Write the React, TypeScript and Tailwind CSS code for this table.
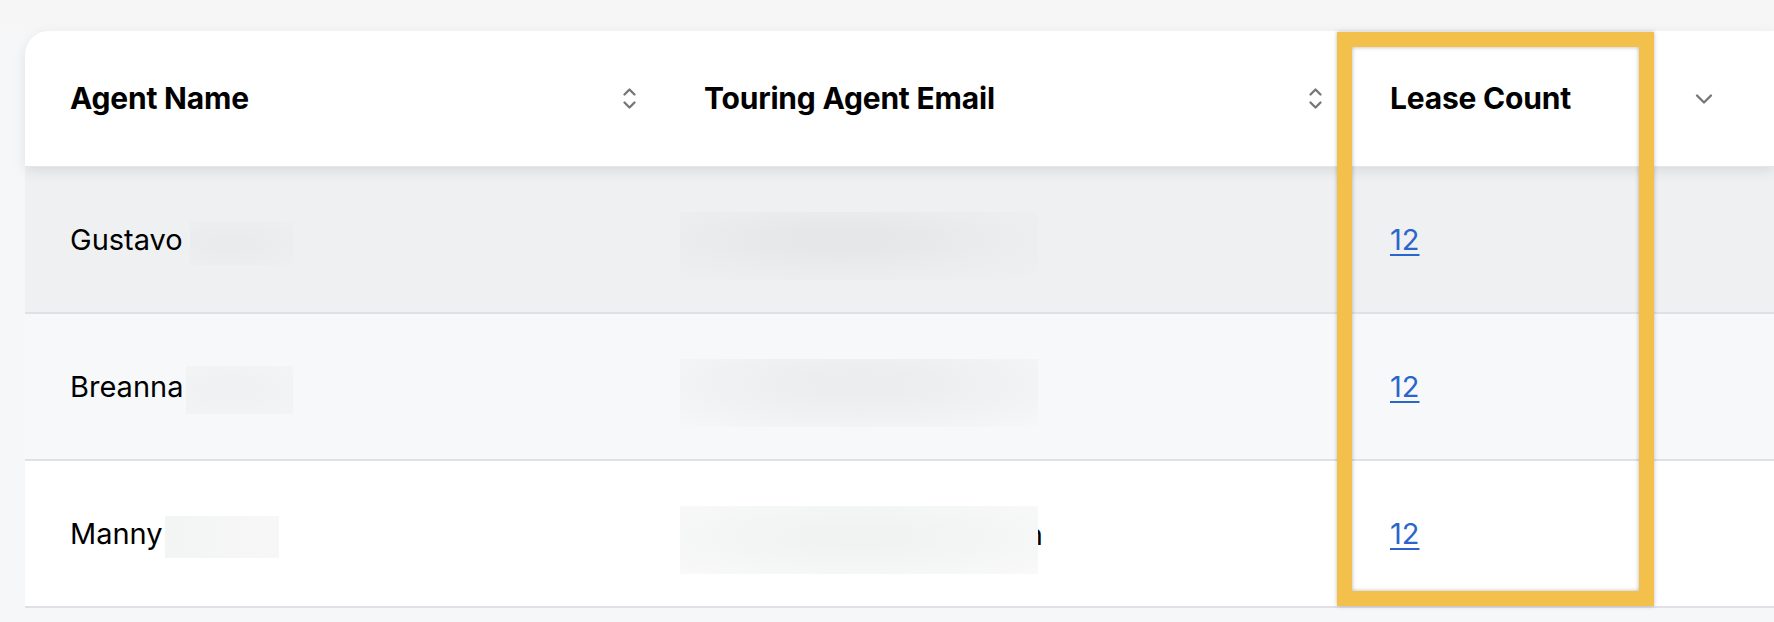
import React from 'react';

type Row = {
  name: string;
  bg: string;
  nameBlob: string;
  nameBlobSize: string;
  emailBlob: string;
  showTail?: boolean;
  count: number;
};

const rows: Row[] = [
  {
    name: 'Gustavo',
    bg: 'bg-[#eff0f2]',
    nameBlob: 'bg-[radial-gradient(ellipse_at_40%_50%,#e9eaec,#eeeff1)]',
    nameBlobSize: 'w-[103px] h-[44px] ml-[7px]',
    emailBlob: 'bg-[radial-gradient(ellipse_at_45%_40%,#e6e7e9_20%,#ebecee_55%,#eff0f2_100%)]',
    count: 12,
  },
  {
    name: 'Breanna',
    bg: 'bg-[#f7f8fa]',
    nameBlob: 'bg-[radial-gradient(ellipse_at_40%_50%,#eff0f2,#f3f4f5)]',
    nameBlobSize: 'w-[107px] h-[48px] ml-[3px]',
    emailBlob: 'bg-[radial-gradient(ellipse_at_50%_35%,#ecedef_20%,#f0f1f2_55%,#f6f7f8_100%)]',
    count: 12,
  },
  {
    name: 'Manny',
    bg: 'bg-white',
    nameBlob: 'bg-[linear-gradient(90deg,#f3f4f4,#f7f7f7)]',
    nameBlobSize: 'w-[114px] h-[42px] ml-[2px]',
    emailBlob: 'bg-[radial-gradient(ellipse_at_50%_45%,#f1f2f2_20%,#f4f5f5_55%,#f9f9f9_100%)]',
    showTail: true,
    count: 12,
  },
];

const SortIcon = () => (
  <svg width="15" height="25" viewBox="0 0 15 25" fill="none" stroke="#767676" strokeWidth="2.3" strokeLinecap="round" strokeLinejoin="round">
    <path d="M2.5 8.5 L7.5 3.5 L12.5 8.5" />
    <path d="M2.5 16.5 L7.5 21.5 L12.5 16.5" />
  </svg>
);

const ChevronDown = () => (
  <svg width="18" height="12" viewBox="0 0 18 12" fill="none" stroke="#767676" strokeWidth="2.3" strokeLinecap="round" strokeLinejoin="round">
    <path d="M2 2.5 L9 9.5 L16 2.5" />
  </svg>
);

const gridCols = 'grid grid-cols-[634px_686px_390px_1fr]';

export default function App() {
  return (
    <div className="min-h-[622px] bg-[#f6f7f8] font-['Inter',sans-serif] text-black overflow-hidden">
      <div className="bg-[#f6f6f6] h-[31px]" />
      <div className="relative pl-[25px]">
        <div className="rounded-tl-[24px] bg-white">
          {/* header */}
          <div className={`${gridCols} relative z-10 h-[136px] rounded-tl-[24px] bg-white border-b border-[#e4e5e8] shadow-[0_4px_14px_rgba(0,0,0,0.09)]`}>
            <div className="flex items-center justify-between pl-[45px] pr-[22px]">
              <span className="text-[30px] font-bold tracking-[-0.2px]">Agent Name</span>
              <SortIcon />
            </div>
            <div className="flex items-center justify-between pl-[45px] pr-[22px]">
              <span className="text-[30px] font-bold tracking-[-0.2px]">Touring Agent Email</span>
              <SortIcon />
            </div>
            <div className="flex items-center justify-between pl-[45px] pr-[22px]">
              <span className="text-[30px] font-bold tracking-[-0.2px]">Lease Count</span>
              <ChevronDown />
            </div>
            <div />
          </div>

          {/* body */}
          {rows.map((row) => (
            <div key={row.name} className={`${gridCols} h-[147px] border-b-2 border-[#dfe1e6] ${row.bg}`}>
              <div className="flex items-center pl-[45px]">
                <span className="text-[29px] leading-none">{row.name}</span>
                <div className={`${row.nameBlobSize} ${row.nameBlob} mt-[6px]`} />
              </div>
              <div className="flex items-center pl-[21px]">
                <div className="relative flex items-center mt-[12px]">
                  {row.showTail && (
                    <span className="absolute right-[-5px] top-[14px] text-[29px] leading-none">n</span>
                  )}
                  <div className={`relative w-[358px] h-[68px] ${row.emailBlob}`} />
                </div>
              </div>
              <div className="flex items-center pl-[45px]">
                <a href="#" className="text-[29px] leading-none text-[#2b65cc] underline underline-offset-[4px] decoration-2">
                  {row.count}
                </a>
              </div>
              <div />
            </div>
          ))}
        </div>

        {/* highlight annotation */}
        <div className="absolute left-[1337px] top-[1px] w-[317px] h-[574px] border-[15px] border-[#f3c14b] z-20 pointer-events-none shadow-[0_0_4px_rgba(0,0,0,0.25),inset_0_0_4px_rgba(0,0,0,0.3)]" />
      </div>
    </div>
  );
}
